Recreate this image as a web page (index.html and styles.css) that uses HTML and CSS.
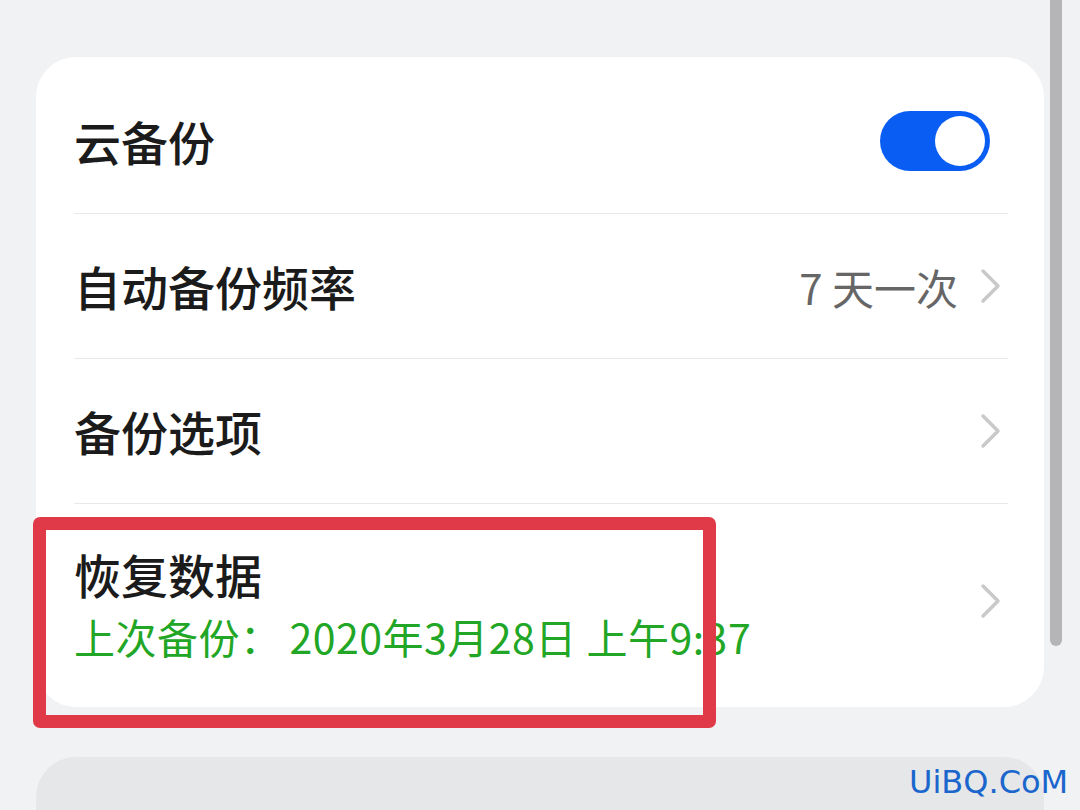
FILE: index.html
```html
<!DOCTYPE html>
<html lang="zh-CN">
<head>
    <meta charset="UTF-8">
    <meta name="viewport" content="width=device-width, initial-scale=1.0">
    <title>云备份</title>
    <link rel="stylesheet" href="styles.css">
</head>
<body>
    <div class="scrollbar"></div>

    <div class="card">
        <div class="row">
            <span class="label">云备份</span>
            <span class="switch on"><span class="knob"></span></span>
        </div>
        <div class="row">
            <span class="label">自动备份频率</span>
            <span class="value">7 天一次</span>
            <svg class="chevron" viewBox="0 0 22 36"><path d="M3 3 L18 18 L3 33" /></svg>
        </div>
        <div class="row">
            <span class="label">备份选项</span>
            <svg class="chevron" viewBox="0 0 22 36"><path d="M3 3 L18 18 L3 33" /></svg>
        </div>
        <div class="row row-tall">
            <div class="text-block">
                <span class="label">恢复数据</span>
                <span class="sub">上次备份：<span class="gap"></span>2020年3月28日 上午9:37</span>
            </div>
            <svg class="chevron chevron-up" viewBox="0 0 22 36"><path d="M3 3 L18 18 L3 33" /></svg>
        </div>
    </div>

    <div class="card card-next"></div>

    <!-- annotation box drawn over the screenshot -->
    <div class="highlight"></div>
    <div class="watermark">UiBQ.CoM</div>
</body>
</html>
```

FILE: styles.css
```css
body {
    margin: 0;
    padding: 0;
    background: #f1f2f4;
    font-family: "Noto Sans CJK SC", "Noto Sans", sans-serif;
    width: 1080px;
    height: 810px;
    overflow: hidden;
    position: relative;
}
.card {
    background: #ffffff;
    margin: 57px 0 0 36px;
    width: 1008px;
    border-radius: 40px;
    padding-top: 12px;
    box-sizing: border-box;
    height: 650px;
    display: flex;
    flex-direction: column;
}
.row {
    height: 145px;
    margin: 0 36px 0 38px;
    display: flex;
    align-items: center;
    border-bottom: 1px solid #e8e8e8;
    box-sizing: border-box;
    flex-shrink: 0;
}
.row-tall {
    flex: 1;
    border-bottom: none;
}
.label {
    font-size: 47px;
    font-weight: 500;
    color: #1b1b1b;
    flex: 1;
    line-height: 1.2;
}
.value {
    font-size: 42px;
    color: #666666;
    margin-right: 22px;
}
.chevron {
    width: 22px;
    height: 36px;
    margin-right: 6px;
}
.chevron-up {
    margin-bottom: 10px;
}
.chevron path {
    fill: none;
    stroke: #c9c9c9;
    stroke-width: 3.5;
    stroke-linecap: round;
    stroke-linejoin: round;
}
.switch {
    width: 110px;
    height: 60px;
    border-radius: 30px;
    background: #0a5df2;
    position: relative;
    margin-right: 18px;
}
.switch .knob {
    position: absolute;
    right: 5px;
    top: 5px;
    width: 50px;
    height: 50px;
    border-radius: 50%;
    background: #ffffff;
}
.text-block {
    flex: 1;
    display: flex;
    flex-direction: column;
    padding-bottom: 6px;
}
.text-block .label {
    flex: none;
    line-height: normal;
}
.sub {
    font-size: 41px;
    color: #22a626;
    line-height: normal;
    letter-spacing: 0.5px;
    margin-top: -2px;
}
.sub .gap {
    display: inline-block;
    width: 8px;
}
.card-next {
    margin-top: 50px;
    height: 53px;
    background: #e6e7e9;
    border-radius: 40px 40px 0 0;
    padding: 0;
}
.scrollbar {
    position: absolute;
    right: 18px;
    top: 0;
    width: 12px;
    height: 646px;
    background: #b5b5b7;
    border-radius: 0 0 6px 6px;
}
.highlight {
    position: absolute;
    left: 33px;
    top: 517px;
    width: 683px;
    height: 211px;
    border: 13px solid #e03a48;
    border-radius: 7px;
    box-sizing: border-box;
}
.watermark {
    position: absolute;
    left: 909px;
    top: 763px;
    font-family: "DejaVu Sans", sans-serif;
    font-size: 32px;
    color: #1a66cc;
}
```
